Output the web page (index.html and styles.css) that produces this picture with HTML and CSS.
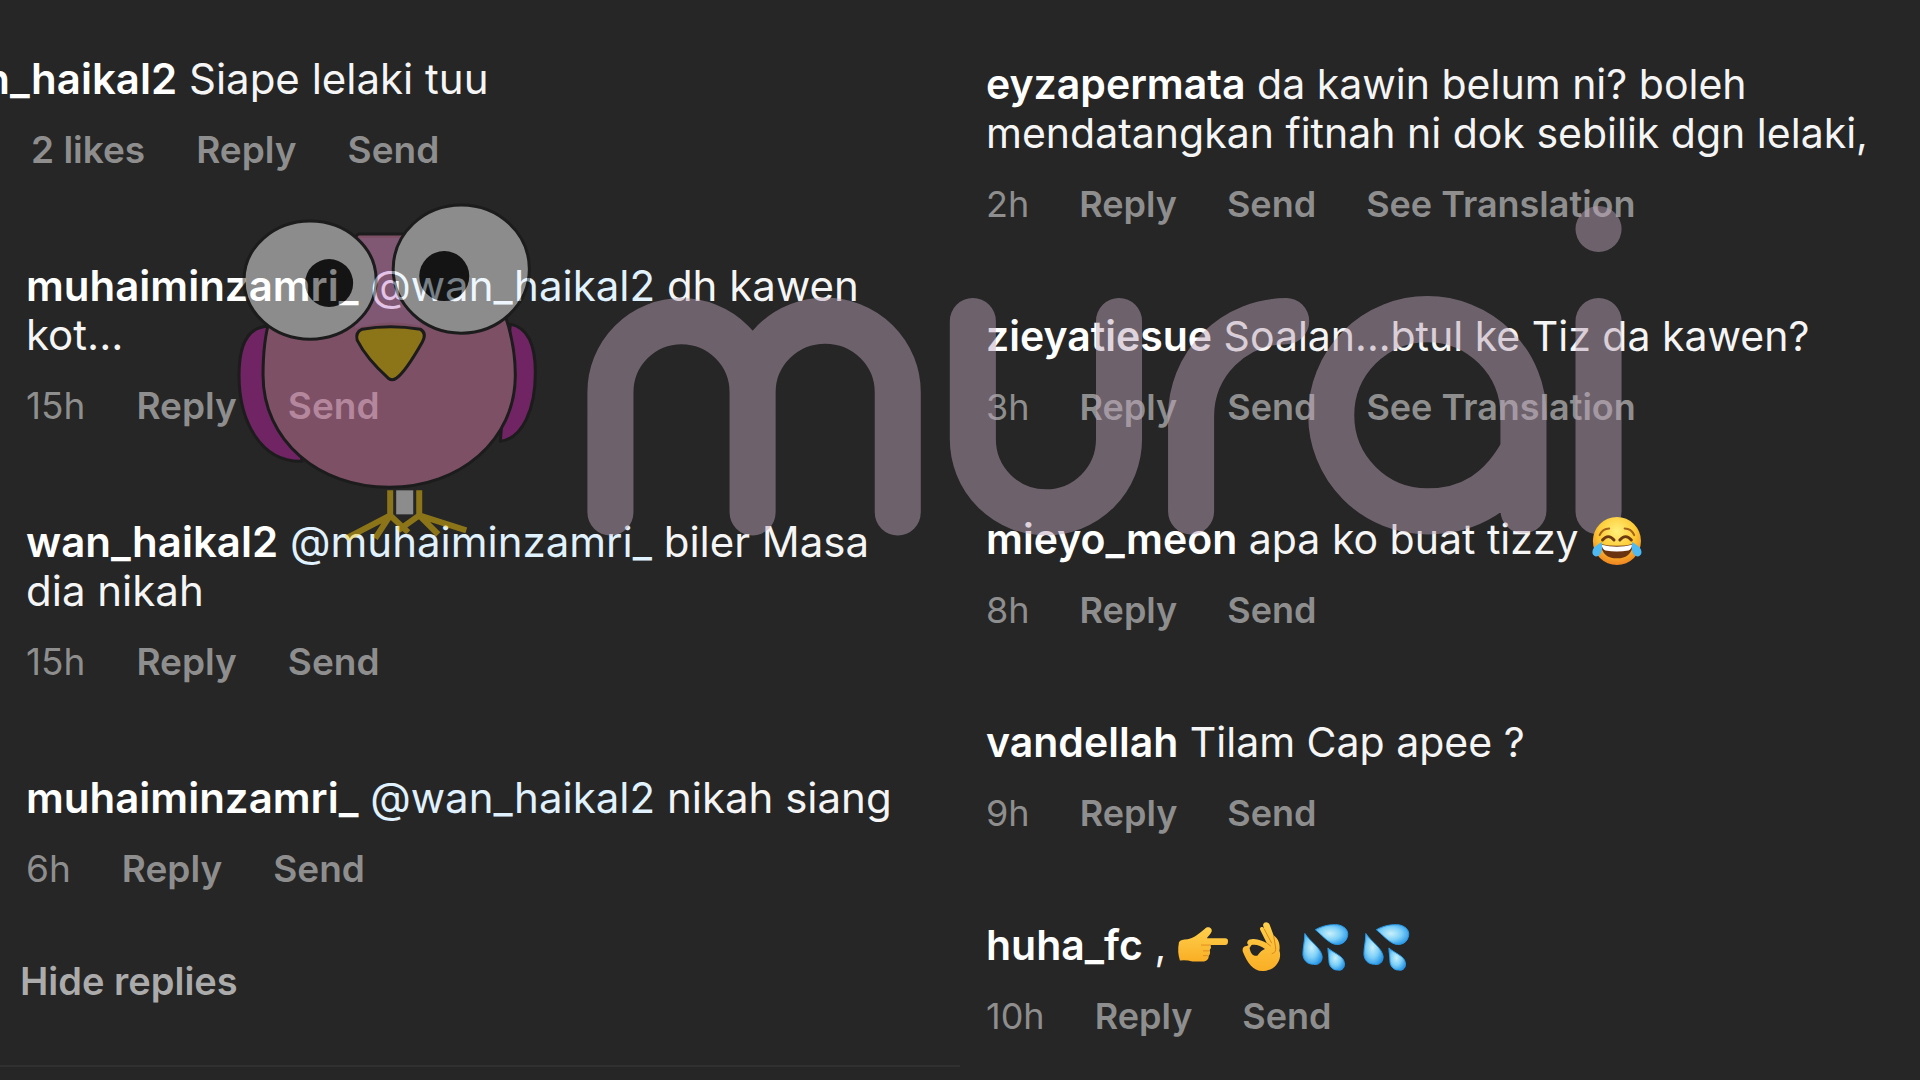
FILE: index.html
```
<!DOCTYPE html>
<html lang="ms">
<head>
    <meta charset="UTF-8">
    <title>Comments</title>
    <link rel="stylesheet" href="styles.css">
</head>
<body>
<svg class="defs" aria-hidden="true">
    <defs>
        <radialGradient id="face" cx="50%" cy="30%" r="70%">
            <stop offset="0" stop-color="#fff07a"/>
            <stop offset=".55" stop-color="#fdc935"/>
            <stop offset="1" stop-color="#ef8420"/>
        </radialGradient>
        <linearGradient id="hand" x1="0" y1="0" x2="0" y2="1">
            <stop offset="0" stop-color="#ffd04d"/>
            <stop offset="1" stop-color="#f9ae25"/>
        </linearGradient>
        <radialGradient id="water" cx="45%" cy="45%" r="65%">
            <stop offset="0" stop-color="#c9f0fb"/>
            <stop offset=".5" stop-color="#7fd0f7"/>
            <stop offset="1" stop-color="#1d8fe6"/>
        </radialGradient>
        <symbol id="splash" viewBox="0 0 52 52">
            <g fill="url(#water)" stroke="#2a9dec">
                <path d="M15 8C22 4 31 2 39 3C47 5 50 10 48 16C46 23 38 25 32 22C26 19 21 13 15 8Z"/>
                <path d="M4 12C9 20 21 27 22 36C22 42 18 45 13 44C6 44 2 39 2 33C2 26 4 20 4 12Z"/>
                <path d="M28 27C33 32 44 35 45 42C46 47 43 51 38 50C32 50 29 45 29 40C29 35 28 31 28 27Z"/>
            </g>
        </symbol>
    </defs>
</svg>

<main class="wrap">
    <section class="column left">
        <article class="comment cut">
            <p class="text"><a class="name" href="#">wan_haikal2</a> Siape lelaki tuu</p>
            <div class="meta"><button>2 likes</button><button>Reply</button><button>Send</button></div>
        </article>
        <article class="comment">
            <p class="text"><a class="name" href="#">muhaiminzamri_</a> <a class="mention" href="#">@wan_haikal2</a> dh kawen kot...</p>
            <div class="meta"><time>15h</time><button>Reply</button><button>Send</button></div>
        </article>
        <article class="comment">
            <p class="text"><a class="name" href="#">wan_haikal2</a> <a class="mention" href="#">@muhaiminzamri_</a> biler Masa dia nikah</p>
            <div class="meta"><time>15h</time><button>Reply</button><button>Send</button></div>
        </article>
        <article class="comment">
            <p class="text"><a class="name" href="#">muhaiminzamri_</a> <a class="mention" href="#">@wan_haikal2</a> nikah siang</p>
            <div class="meta"><time>6h</time><button>Reply</button><button>Send</button></div>
        </article>
        <button class="hide">Hide replies</button>
    </section>

    <section class="column right">
        <article class="comment">
            <p class="text"><a class="name" href="#">eyzapermata</a> da kawin belum ni? boleh mendatangkan fitnah ni dok sebilik dgn lelaki,</p>
            <div class="meta"><time>2h</time><button>Reply</button><button>Send</button><button>See Translation</button></div>
        </article>
        <article class="comment">
            <p class="text"><a class="name" href="#">zieyatiesue</a> Soalan...btul ke Tiz da kawen?</p>
            <div class="meta"><time>3h</time><button>Reply</button><button>Send</button><button>See Translation</button></div>
        </article>
        <article class="comment">
            <p class="text"><a class="name" href="#">mieyo_meon</a> apa ko buat tizzy
                <svg class="emoji" viewBox="0 0 52 52" role="img" aria-label="😂">
                    <circle cx="28" cy="26" r="25" fill="url(#face)"/>
                    <path d="M10 20Q13 13 20 13M36 13Q43 13 46 20" fill="none" stroke="#a3611a" stroke-width="2" stroke-linecap="round"/>
                    <path d="M13 25Q19 18 25 25M31 25Q37 18 43 25" fill="none" stroke="#6b3a12" stroke-width="3" stroke-linecap="round"/>
                    <path d="M11 29Q28 33 45 29Q43 44 28 44Q13 44 11 29Z" fill="#6b3411"/>
                    <path d="M12 30Q28 34 44 30Q43 35 40 36Q28 38 16 36Q13 35 12 30Z" fill="#fff"/>
                    <path d="M12 27C14 36 11 42 6 42C1 41 2 35 5 32Z" fill="#4fb9f2"/>
                    <path d="M44 27C42 36 45 42 50 42C55 41 54 35 51 32Z" fill="#4fb9f2"/>
                </svg>
            </p>
            <div class="meta"><time>8h</time><button>Reply</button><button>Send</button></div>
        </article>
        <article class="comment">
            <p class="text"><a class="name" href="#">vandellah</a> Tilam Cap apee ?</p>
            <div class="meta"><time>9h</time><button>Reply</button><button>Send</button></div>
        </article>
        <article class="comment">
            <p class="text"><a class="name" href="#">huha_fc</a> ,
                <svg class="emoji" viewBox="0 0 52 52" role="img" aria-label="👉">
                    <path d="M1 21Q3 18 10 18C18 16 23 11 28 7C31 4 36 6 35 10C34 13 31 15 30 17H49Q52 17 52 20Q52 24 49 24H34Q35 27 33 29Q34 33 32 35Q32 40 27 41H15Q8 39 2 40Q-1 31 1 21Z" fill="url(#hand)"/>
                    <path d="M34 24H24M33 30H26M31 35H26" fill="none" stroke="#e08d1b" stroke-width="1"/>
                </svg>
                <svg class="emoji" viewBox="0 0 52 52" role="img" aria-label="👌">
                    <path fill-rule="evenodd" d="M25 3C26-1 31 0 32 3L36 14C41 17 43 23 42 30C45 38 39 50 26 51C15 52 9 43 4 31C3 27 5 25 8 25L10 24C7 22 9 18 13 18C19 17 25 20 29 22L22 8C21 5 25 4 26 7ZM11 27C12 33 15 36 19 35C22 31 24 29 27 28C23 25 18 23 13 24Z" fill="url(#hand)"/>
                    <path d="M26 7L34 22M36 14L38 26Q39 32 34 33M29 22L33 25" fill="none" stroke="#d58418" stroke-width="1"/>
                </svg>
                <svg class="emoji" role="img" aria-label="💦"><use href="#splash"/></svg>
                <svg class="emoji" role="img" aria-label="💦"><use href="#splash"/></svg>
            </p>
            <div class="meta"><time>10h</time><button>Reply</button><button>Send</button></div>
        </article>
    </section>

    <svg class="watermark" viewBox="230 195 1400 350" role="img" aria-label="murai">
        <!-- bird -->
        <g stroke="#111" stroke-width="3" stroke-linejoin="round">
            <path d="M269 326C248 326 239 345 239 375C239 420 260 462 302 461L290 400Z" fill="#c422aa"/>
            <path d="M510 324C530 328 535 350 535 372C535 410 522 438 500 441L505 380Z" fill="#c422aa"/>
            <path d="M358 234H408L505 316Q515 345 515 375C515 440 460 487 389 487C318 487 263 440 263 375Q263 340 270 318Z" fill="#df80ae"/>
            <path d="M360 238H406L420 326Q390 318 355 328Z" fill="#e790cb" stroke="none"/>
            <ellipse cx="310" cy="280" rx="66" ry="59" fill="#fff"/>
            <ellipse cx="461" cy="269" rx="68" ry="64" fill="#fff"/>
            <path d="M362 329Q390 324 420 329Q427 333 422 342Q405 372 396 378Q392 381 388 378Q366 358 357 340Q355 332 362 329Z" fill="#ffcc0a"/>
        </g>
        <circle cx="329" cy="283" r="24"/>
        <circle cx="444" cy="276" r="25"/>
        <path d="M396 490H413V514H396Z" fill="#fff"/>
        <path d="M390 490V515L346 538M390 515L375 538M390 515L408 532M419 490V515L466 530M419 515L398 530M419 515L438 534" fill="none" stroke="#ffcc0a" stroke-width="6"/>
        <!-- wordmark -->
        <g fill="none" stroke="#bda6b9" stroke-width="46" stroke-linecap="round">
            <path d="M610 512V392A71 71 0 0 1 752 392V512M752 392A72 71 0 0 1 897 392V512"/>
            <path d="M972 321V439A73 73 0 0 0 1118 439V321"/>
            <path d="M1190 511V416A95 95 0 0 1 1285 321"/>
            <path d="M1522 510V415A96 96 0 1 0 1426 511Q1490 511 1522 450"/>
            <path d="M1597 321V511M1597 229V229"/>
        </g>
    </svg>
</main>
</body>
</html>
```
FILE: styles.css
```
body,p{margin:0;}
body{
    background-color: #262626;
    font-family: Inter,"Liberation Sans",sans-serif;
    color: #f5f5f5;
}
a{color: inherit;text-decoration: none;}
button{
    padding: 0;
    border: none;
    background: none;
    font: inherit;
    font-weight: 600;
    color: inherit;
    cursor: pointer;
}
.defs{
    position: absolute;
    width: 0;
    height: 0;
}
.wrap{
    position: relative;
    display: grid;
    grid-template-columns: 1fr 1fr;
    min-height: 100vh;
    overflow: hidden;
}
.column{
    display: flex;
    flex-direction: column;
    align-items: flex-start;
    box-sizing: border-box;
}
.column.left{
    gap: 90px;
    align-self: start;
    padding: 54px 56px 63px 26px;
    border-bottom: 2px solid #303030;
}
.column.right{
    gap: 87px;
    padding: 60px 40px 40px 26px;
}
.comment .text{
    line-height: 49px;
}
.left .text{
    font-size: 42px;
}
.right .text{
    font-size: 41px;
}
.comment .name{
    font-weight: 600;
    color: #fff;
}
.comment .mention{
    color: #e0f1ff;
}
.comment .meta{
    display: flex;
    line-height: 42px;
    color: #8e8e8e;
}
.left .meta{
    gap: 51px;
    margin-top: 26px;
    font-size: 37px;
}
.right .meta{
    gap: 50px;
    margin-top: 25px;
    font-size: 36px;
}
/* first comment is scrolled sideways */
.comment.cut .text{
    margin-left: -101px;
}
.comment.cut .meta{
    padding-left: 5px;
}
.hide{
    margin: -20px 0 0 -6px;
    font-size: 38px;
    line-height: 42px;
    color: #ababab;
}
.emoji{
    position: relative;
    z-index: 2;
    width: 50px;
    height: 50px;
    margin: -8px 0;
    vertical-align: -4px;
    overflow: visible;
}
.watermark{
    position: absolute;
    z-index: 1;
    top: 195px;
    left: 12%;
    width: 73%;
    opacity: .47;
    pointer-events: none;
}
```
